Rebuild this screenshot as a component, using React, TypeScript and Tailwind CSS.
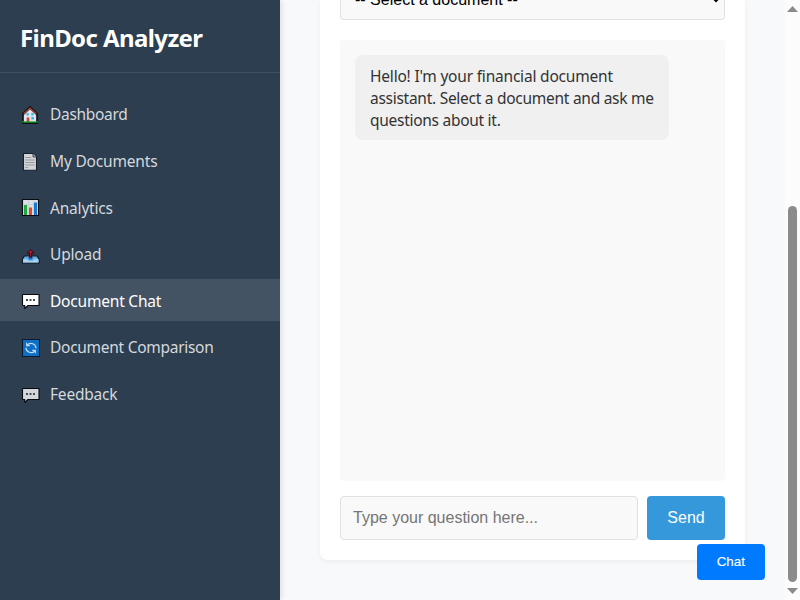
import React from "react";

const svgProps = {
  width: 20,
  height: 20,
  viewBox: "0 0 20 20",
  className: "mr-2.5 shrink-0",
};

function HouseIcon() {
  return (
    <svg {...svgProps}>
      <path d="M3 18V9L10 2l7 7v9z" fill="#dce5ec" stroke="#0b0f14" strokeWidth="1.6" strokeLinejoin="round" />
      <path d="M2.8 9.4 10 2.6l7.2 6.8" fill="none" stroke="#111" strokeWidth="2.2" />
      <path d="M3.6 8.8 10 2.9l6.4 5.9" fill="none" stroke="#c8452f" strokeWidth="1.1" />
      <path d="M6.5 8h2.2v2.4H6.500zM11.300 8h2.200v2.400h-2.200zM11.300 12h2.600v2.400h-2.600z" fill="#3fb4e8" />
      <path d="M6.700 12.500H9.300V17H6.700z" fill="#d23f31" />
      <path d="M2 17h16" stroke="#16a51d" strokeWidth="1.3" />
      <path d="M2 18.300h16" stroke="#0b0f14" strokeWidth=".8" />
    </svg>
  );
}

function PageIcon() {
  return (
    <svg {...svgProps}>
      <path d="M3.500 1.500h9.500l3.500 3.500v13.300h-13z" fill="#d3d5d7" stroke="#17202a" strokeWidth="1.100" strokeLinejoin="round" />
      <path d="M13 1.500V5h3.500" fill="#a8adb2" stroke="#17202a" strokeWidth=".7" />
      <path d="M5.300 5.500h6M5.300 8h9.400M5.300 10.500h9.400M5.300 13h9.400M5.300 15.500h3" stroke="#969a9e" strokeWidth="1" />
    </svg>
  );
}

function ChartIcon() {
  return (
    <svg {...svgProps}>
      <path d="M2.500 1.500h16v16h-16z" fill="#dadfe3" stroke="#080c10" strokeWidth="1.100" />
      <path d="M3 6.500h15M3 11.500h15M8.500 2v15M13.500 2v15" stroke="#c2c9cf" strokeWidth=".6" />
      <path d="M4 7h3v10H4z" fill="#20a83a" />
      <path d="M9 9.500h3V17H9z" fill="#de4a2c" />
      <path d="M14 4.500h3V17h-3z" fill="#1678cf" />
    </svg>
  );
}

function UploadIcon() {
  return (
    <svg {...svgProps}>
      <path d="m4.500 11-2 3v4h16.500v-4l-2-3z" fill="#69afe2" stroke="#101820" strokeWidth="1.100" strokeLinejoin="round" />
      <path d="M3 14.200h4.200l1.300 1.500h4.500l1.300-1.500h4.200v3.200H3z" fill="#a8d2ee" />
      <path d="M8 12.300h5l-1 2.200H9z" fill="#1769b8" />
      <path d="m10.700 4.500-3.400 3.700h2.400v4h2V8.200h2.400z" fill="#c0122d" stroke="#190d13" strokeWidth=".9" />
    </svg>
  );
}

function SpeechIcon({ active = false }: { active?: boolean }) {
  return (
    <svg {...svgProps}>
      <path
        d="M3 3.500h16v11H8l-3.200 3V14.500H3c-.4 0-.5-.2-.5-.5V4c0-.3.100-.5.500-.5z"
        fill={active ? "#ffffff" : "#d3d7db"}
        stroke="#080b0e"
        strokeWidth="1.100"
        strokeLinejoin="round"
      />
      <path d="M6 8h2v2H6zM9.500 8h2v2h-2zM13 8h2v2h-2z" fill="#4b4f54" />
    </svg>
  );
}

function RefreshIcon() {
  return (
    <svg {...svgProps}>
      <path d="M2.500 1.500h17v17h-17z" fill="#0e6fc6" stroke="#091b2c" strokeWidth="1.100" />
      <g fill="none" stroke="#c3dcef" strokeWidth="1.200">
        <path d="M7.300 7A5 5 0 0 1 16 10.300M6 9.700A5 5 0 0 0 14.700 13" />
        <path d="M6.700 4.700v3h3M15.300 15.300v-3h-3" />
      </g>
    </svg>
  );
}

const items = [
  { label: "Dashboard", icon: <HouseIcon />, tracking: "tracking-[-0.3px]" },
  { label: "My Documents", icon: <PageIcon />, tracking: "tracking-[-0.18px]" },
  { label: "Analytics", icon: <ChartIcon />, tracking: "tracking-[-0.2px]" },
  { label: "Upload", icon: <UploadIcon />, tracking: "tracking-[-0.2px]" },
  { label: "Document Chat", icon: <SpeechIcon active />, tracking: "tracking-[-0.2px]", active: true },
  { label: "Document Comparison", icon: <RefreshIcon />, tracking: "tracking-[-0.28px]" },
  { label: "Feedback", icon: <SpeechIcon />, tracking: "tracking-[-0.2px]" },
];

function Sidebar() {
  return (
    <aside className="z-10 w-[280px] shrink-0 bg-[#2c3e50] shadow-[2px_0_5px_rgba(0,0,0,0.1)]">
      <h1 className="flex h-[73px] items-center border-b border-white/10 px-5 pt-1 text-2xl font-bold text-white">
        <span className="whitespace-nowrap tracking-[-0.6px]">FinDoc Analyzer</span>
      </h1>
      <nav className="flex flex-col gap-[5px] pt-5">
        {items.map((item) => (
          <a
            key={item.label}
            className={`flex h-[41.600px] items-center px-5 pt-[2.6px] text-[15.5px] ${item.active ? "bg-[#435363] text-white" : "text-[#d5d8dc]"}`}
          >
            {item.icon}
            <span className={`whitespace-nowrap ${item.tracking}`}>{item.label}</span>
          </a>
        ))}
      </nav>
    </aside>
  );
}

function ScrollBar() {
  return (
    <div className="flex w-[15px] shrink-0 flex-col items-center bg-[#fcfcfc] pt-[6px] pb-[6px]">
      <svg width="11" height="6" viewBox="0 0 11 6"><path d="M0 6 5.500 0 11 6z" fill="#8b8b8b" /></svg>
      <div className="mt-[194px] h-[376px] w-[9px] rounded-full bg-[#8b8b8b]" />
      <svg className="mt-[6px]" width="11" height="6" viewBox="0 0 11 6"><path d="M0 0 5.500 6 11 0z" fill="#8b8b8b" /></svg>
    </div>
  );
}

export default function App() {
  return (
    <div className="relative flex h-[600px] w-[800px] overflow-hidden bg-[#f8f9fa] font-['Noto_Sans',sans-serif] text-base">
      <Sidebar />
      <main className="flex min-w-0 flex-1 flex-col bg-[#f8f9fb] px-10">
        <section className="flex h-[560px] flex-col rounded-b-[8px] bg-white px-5 pb-5 shadow-[0_2px_5px_rgba(0,0,0,0.05)]">
          <div className="flex h-5 shrink-0 items-end justify-between overflow-hidden rounded-b-[4px] border border-t-0 border-[#e1e1e1] bg-[#f9f9f9] pr-0.5 pb-[9px] pl-[14px] font-['Liberation_Sans',Arial,sans-serif] text-black">
            <span className="leading-5">-- Select a document --</span>
            <svg className="mb-[7px]" width="12" height="8" viewBox="0 0 12 8"><path d="m2 2 4 4 4-4" fill="none" stroke="#000" strokeWidth="2" /></svg>
          </div>
          <div className="mt-5 h-[441px] shrink-0 rounded-[4px] bg-[#f9f9f9] p-[15px]">
            <div className="h-[85px] w-[314px] rounded-[8px] bg-[#f0f0f0] px-[15px] pt-[10px] text-[15.5px] leading-[22px] whitespace-nowrap text-[#333]">
              <p className="tracking-[-0.2px]">Hello! I'm your financial document</p>
              <p className="tracking-[-0.27px]">assistant. Select a document and ask me</p>
              <p className="tracking-[-0.28px]">questions about it.</p>
            </div>
          </div>
          <div className="mt-[15px] flex h-11 shrink-0 font-['Liberation_Sans',Arial,sans-serif]">
            <input
              className="mr-[9px] w-[298px] rounded-[4px] border border-[#e1e1e1] bg-[#f9f9f9] px-3 outline-none placeholder:text-[#757575] placeholder:opacity-100"
              placeholder="Type your question here..."
            />
            <button className="flex-1 rounded-[4px] bg-[#3498db] text-white">Send</button>
          </div>
        </section>
      </main>
      <ScrollBar />
      <button className="absolute top-[544px] left-[697px] z-20 h-9 w-[67.6px] rounded-[4px] bg-[#007bff] font-['Liberation_Sans',Arial,sans-serif] text-[13.333px] text-white [-webkit-text-stroke:0.12px_white]">
        Chat
      </button>
    </div>
  );
}
